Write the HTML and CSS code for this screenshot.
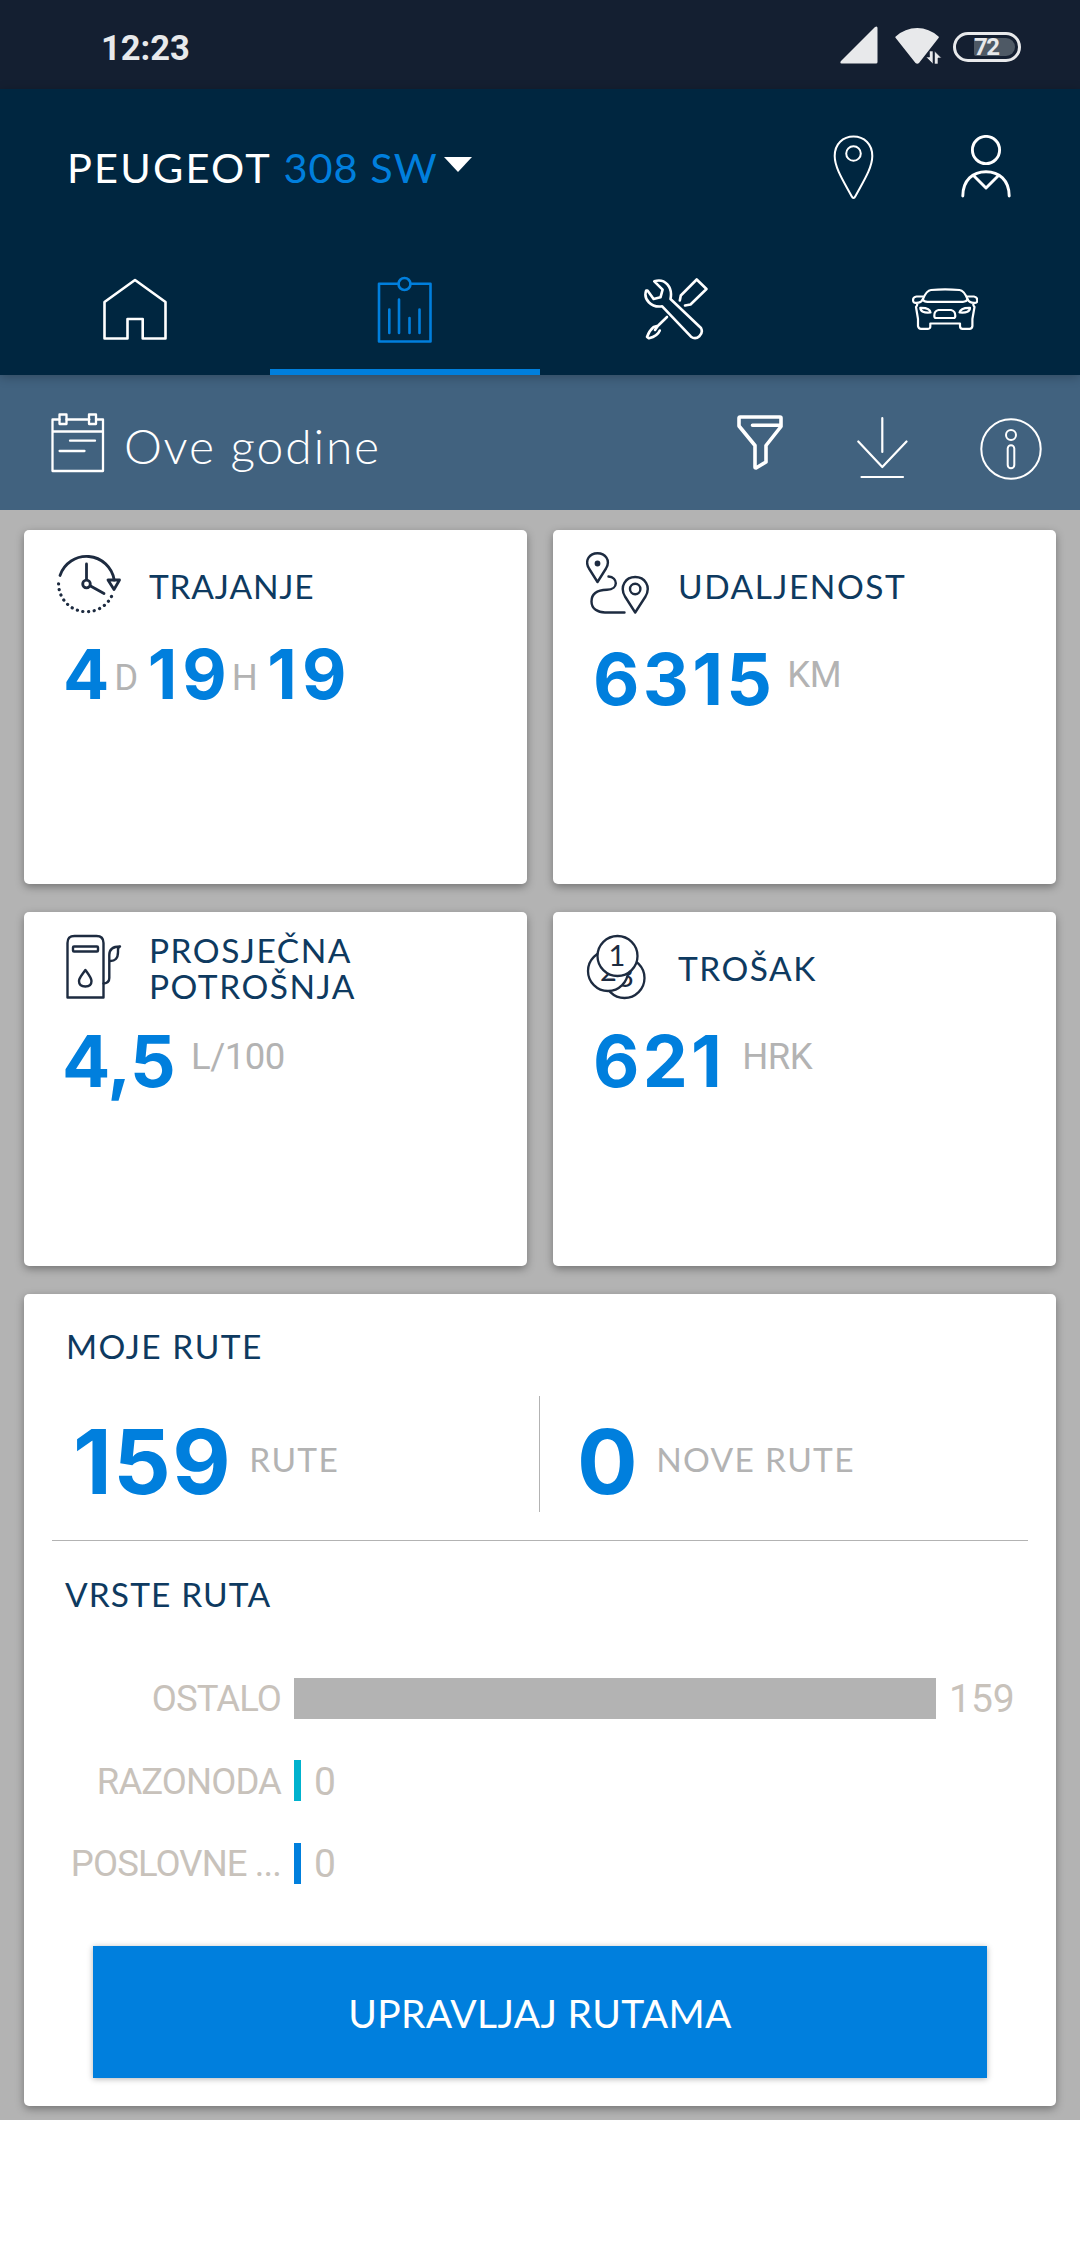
FILE: index.html
```html
<!DOCTYPE html>
<html lang="hr">
<head>
    <meta charset="UTF-8">
    <meta name="viewport" content="width=device-width, initial-scale=1.0">
    <title>Peugeot 308 SW - Rute</title>
    <link rel="stylesheet" href="styles.css">
</head>
<body>
    <div class="status-bar">
        <span class="clock">12:23</span>
        <div class="status-icons">
            <svg class="signal" width="38" height="38" viewBox="0 0 38 38"><path d="M1.5 37.5 Q-.5 37 1 35 L35 1 Q37.5 -.5 37.5 2 V36 Q37.5 37.5 36 37.5Z" fill="#e8e9eb"/></svg>
            <svg class="wifi" width="48" height="36" viewBox="0 0 48 36">
                <path d="M.7 8.5 Q10 0 22.300 0 Q34 0 43.500 8.500 Q44.200 9.200 43.500 10 L24 35 Q22.300 36.500 20.500 35 L.7 10 Q0 9.200 .7 8.500Z" fill="#e8e9eb"/>
                <path d="M38 36 V23 H34.500 V29 H31 L38 36Z M39.500 36 V23 L46.500 30 H43 V36Z" fill="#e8e9eb" stroke="#141f31" stroke-width=".6"/>
            </svg>
            <div class="battery"><span class="battery-level">72</span></div>
        </div>
    </div>

    <header>
        <div class="header-top">
            <h1 class="car-name">PEUGEOT <span class="car-model">308 SW</span></h1>
            <svg class="caret" width="28" height="15" viewBox="0 0 28 15"><path d="M0 0 H28 L14 15Z" fill="#fff"/></svg>
            <svg class="icon pin" width="42" height="66" viewBox="0 0 42 66" stroke-width="2">
                <path d="M20.500 64 Q19.500 64 18.500 62 C11 48 1.700 34 1.700 22 C1.700 10 10 2.500 20.500 2.500 C31 2.500 39.300 10 39.300 22 C39.300 34 30 48 22.500 62 Q21.500 64 20.500 64Z"/>
                <circle cx="20.500" cy="19.500" r="7.300"/>
            </svg>
            <svg class="icon profile" width="50" height="64" viewBox="0 1 50 64" stroke-width="2.900">
                <circle cx="25" cy="16" r="13.600"/>
                <path d="M1.800 62 C1.800 46 12 37.700 25 37.700 C38 37.700 48.200 46 48.200 62 M12.500 41.500 L25 54 L37.500 41.500"/>
            </svg>
        </div>
        <nav class="tabs">
            <a class="tab">
                <svg class="icon" width="66" height="64" viewBox="0 0 66 64" stroke-width="2.600"><path d="M33 3 L63.500 25 V61.500 H40.700 V42 H25.500 V61.500 H2.500 V25Z"/></svg>
            </a>
            <a class="tab active">
                <svg class="icon" width="56" height="68" viewBox="0 0 56 68" stroke-width="2.600">
                    <path d="M21.500 8.700 H2 V66.500 H53.500 V8.700 H33.500"/>
                    <circle cx="27.500" cy="9" r="6"/>
                    <path d="M12.300 34.500 V58 M22 24.500 V58 M32.500 43 V58 M42.500 34.500 V58"/>
                </svg>
            </a>
            <a class="tab">
                <svg class="icon tools" width="66" height="64" viewBox="0 0 66 64" stroke-width="2.600">
                    <path d="M11.300 4.300 C22 1 30 10 27.500 22 L58 51 C61 57 54 64 48 59.700 L19.200 29.300 C8 31 0 22 3.200 13.500 L4.500 13.500 L10.600 22 L17.500 20.300 L19.600 12.700Z"/>
                    <path d="M36.800 23.500 L37.800 18.500 L53.700 2.500 L63.500 12 L47.500 27.500 L42 28.500"/>
                    <path d="M24 40 L15 48.700 L10.600 50 C7 53 5 57 4 60 L6 61.300 C11 60 15 58 16.800 53.500 M15 48.700 L12 53"/>
                </svg>
            </a>
            <a class="tab">
                <svg class="icon" width="66" height="42" viewBox="0 0 66 42" stroke-width="2.200">
                    <path d="M10.700 11.500 C13 6 15 2.300 19 2 Q33 .7 47.500 2 C51.500 2.300 53.500 6 55.700 11.500 Q54 13.800 51 13.800 H15.500 Q12 13.800 10.700 11.500Z"/>
                    <path d="M11 8.500 H4.500 Q1 9 1 12 Q1 15 4 14.800 Q6.500 16 4 19 L6 31 V38 Q6.500 40.800 9 40.800 H16 Q18.500 40.800 18.300 38 V35.500 H48 V38 Q48 40.800 50.500 40.800 H57.500 Q60 40.800 60.400 38 V31 L62.500 19 Q60 16 62.500 14.800 Q65.500 15 65.200 12 Q65.200 9 62 8.500 H55.500 M4 14.800 Q9 15 10.700 11.500 M62.500 14.800 Q57.500 15 55.700 11.500"/>
                    <path d="M8.300 19.800 Q18 19.500 18.500 24.500 Q8.500 25.500 8.300 19.800Z M58 19.800 Q48.500 19.500 47.500 24.500 Q58 25.500 58 19.800Z"/>
                    <path d="M26.500 22 H39 Q43.500 23 43.300 28 Q43.300 30 41.500 30 H24 Q22.300 30 22.300 28 Q22 23 26.500 22Z"/>
                </svg>
            </a>
        </nav>
    </header>

    <div class="filter-bar">
        <svg class="icon" width="54" height="60" viewBox="0 0 54 60" stroke-width="2.300">
            <path d="M8.500 6.500 H1.500 V58 H52 V6.500 H45 M15.500 6.500 H38.300 M1.500 18.500 H52"/>
            <path d="M8.500 1.500 H15.500 V11 H8.500Z M38 1.500 H45 V11 H38Z M19 27.700 H44 M8.600 38 H33.500"/>
        </svg>
        <span class="period">Ove godine</span>
        <svg class="icon funnel" width="46" height="55" viewBox="0 0 46 55" stroke-width="3.600"><path d="M2 3 Q2 2 3 2 H43 Q44 2 44 3 V11.500 L29 30.500 V47 L19 53 Q18 53 18 52 V30.500 L2 11Z M15.500 10.300 H43"/></svg>
        <svg class="icon download" width="51" height="62" viewBox="0 0 51 62" stroke-width="2.200"><path d="M25.300 1.200 V35 M1.300 24.500 L25.300 50 L49.500 24.500 M4.500 60 H46"/></svg>
        <svg class="icon info" width="62" height="62" viewBox="0 0 62 62" stroke-width="2">
            <circle cx="31" cy="31" r="29.700"/>
            <circle cx="31" cy="17" r="5"/>
            <rect x="27.700" y="27.300" width="6.600" height="23" rx="3.300"/>
        </svg>
    </div>

    <main>
        <div class="stats">
            <section class="card">
                <div class="card-head">
                    <svg class="icon dark" width="66" height="66" viewBox="0 -1 66 66" stroke-width="2.800">
                        <path d="M3 22.500 A28 28 0 0 1 57.200 27"/>
                        <path d="M54.500 43.500 A28 28 0 0 1 1.600 29.500" stroke-width="3.200" stroke-dasharray="0.1 5.600"/>
                        <path d="M51 27 H62.500 L57 36.500Z M29.500 11 V26.500 M33.500 33 L47 40.500"/>
                        <circle cx="29.500" cy="31" r="3.800"/>
                    </svg>
                    <h2 class="duration-title">TRAJANJE</h2>
                </div>
                <div class="value duration"><b>4</b><i>D</i><b>19</b><i>H</i><b>19</b></div>
            </section>
            <section class="card">
                <div class="card-head">
                    <svg class="icon dark" width="66" height="66" viewBox="1 1 66 66" stroke-width="2.400">
                        <path d="M12.500 31 L4 17.500 C-1 9 5 2.300 12.500 2.300 C20 2.300 26 9 21 17.500Z"/>
                        <circle cx="12.500" cy="12.500" r="1.700" fill="#1d2b40"/>
                        <path d="M50.200 61.500 L40 45.500 C34 35 41 26 50.200 26 C59.500 26 66.500 35 60.500 45.500Z"/>
                        <circle cx="50.200" cy="38" r="5.200"/>
                        <path d="M23.500 25.500 C33 26 34 38.500 22 38.800 C12 39 6.500 43 6.500 50.500 C6.500 58 13 61.500 20 61.500 H39.500"/>
                    </svg>
                    <h2>UDALJENOST</h2>
                </div>
                <div class="value"><b>6315</b><i>KM</i></div>
            </section>
            <section class="card">
                <div class="card-head">
                    <svg class="icon dark" width="66" height="66" viewBox="-9 0 66 66" stroke-width="2.400">
                        <path d="M1.500 63.500 V9 Q1.500 2 8.500 2 H30.500 Q37.500 2 37.500 9 V63.500Z"/>
                        <rect x="7" y="12.500" width="25" height="5" rx="1"/>
                        <path d="M19.400 36 C16 41 13 44 13 47 Q13 52.500 19.400 52.500 Q25.500 52.500 25.500 47 C25.500 44 23 41 19.400 36Z"/>
                        <path d="M37.500 49.500 Q43.300 49 43.300 44 V21 Q43.300 12.500 54 12.500 Q52 13 52 16 V18 Q52 27.500 43.500 27"/>
                    </svg>
                    <h2>PROSJEČNA<br>POTROŠNJA</h2>
                </div>
                <div class="value consumption"><b>4,5</b><i>L/100</i></div>
            </section>
            <section class="card">
                <div class="card-head">
                    <svg class="icon dark coins" width="66" height="66" viewBox="-1 0 66 66" stroke-width="2.300">
                        <circle cx="37.500" cy="44" r="20"/>
                        <text x="30" y="53">3</text>
                        <circle cx="21" cy="37" r="20"/>
                        <text x="13" y="47">2</text>
                        <circle cx="30.500" cy="22" r="20"/>
                        <text x="21.500" y="32">1</text>
                    </svg>
                    <h2>TROŠAK</h2>
                </div>
                <div class="value cost"><b>621</b><i>HRK</i></div>
            </section>
        </div>

        <section class="card routes">
            <h2>MOJE RUTE</h2>
            <div class="counts">
                <div class="count"><b>159</b><span>RUTE</span></div>
                <div class="count new"><b>0</b><span>NOVE RUTE</span></div>
            </div>
            <h2 class="types-title">VRSTE RUTA</h2>
            <ul class="chart">
                <li><span class="label">OSTALO</span><span class="bar other"></span><span>159</span></li>
                <li><span class="label">RAZONODA</span><span class="bar leisure"></span><span>0</span></li>
                <li><span class="label">POSLOVNE ...</span><span class="bar business"></span><span>0</span></li>
            </ul>
            <button class="manage">UPRAVLJAJ RUTAMA</button>
        </section>
    </main>
</body>
</html>
```
FILE: styles.css
```css
:root {
    --navy: #002640;
    --blue: #007fdd;
    --title: #0e3a60;
    --grey: #b3b3b3;
}

* {
    margin: 0;
    padding: 0;
    box-sizing: border-box;
}

body {
    width: 1080px;
    min-height: 2246px;
    font-family: Lato, "Noto Sans", sans-serif;
    background-color: #fff;
}

svg {
    display: block;
    flex-shrink: 0;
}

.icon {
    fill: none;
    stroke: #fff;
    stroke-linejoin: round;
    stroke-linecap: round;
}

.icon.dark {
    stroke: #1d2b40;
}

/* status bar */
.status-bar {
    display: flex;
    justify-content: space-between;
    height: 89px;
    padding: 0 59px 0 101px;
    background-color: #141f31;
    color: #e8e9eb;
    font-family: Roboto, sans-serif;
}

.clock {
    font-size: 34.5px;
    font-weight: 700;
    line-height: 97px;
}

.status-icons {
    display: flex;
    align-items: flex-start;
    padding-top: 26px;
}

.wifi {
    margin: 2px 10px 0 17px;
}

.battery {
    width: 68px;
    height: 30px;
    margin-top: 6px;
    padding: 3px 3px 3px 18px;
    border: 3px solid #e8e9eb;
    border-radius: 15px;
}

.battery-level {
    display: block;
    height: 18px;
    border-radius: 2px 9px 9px 2px;
    background-color: #4e5965;
    font-size: 24px;
    font-weight: 700;
    line-height: 19px;
    letter-spacing: -1.5px;
}

/* header */
header {
    position: relative;
    height: 286px;
    background-color: var(--navy);
    box-shadow: 0 2px 10px rgba(0,0,0,0.25);
}

.header-top {
    display: flex;
    align-items: center;
    height: 155px;
    padding: 0 69px 0 67px;
}

.car-name {
    color: white;
    font-size: 41.5px;
    font-weight: 400;
    letter-spacing: 2.2px;
    line-height: 154px;
}

.car-model {
    color: var(--blue);
    letter-spacing: 1px;
}

.caret {
    margin: -4px auto 0 6px;
}

.profile {
    margin-left: 86px;
}

.tabs {
    display: grid;
    grid-template-columns: repeat(4, 1fr);
    height: 131px;
}

.tab {
    display: flex;
    align-items: center;
    justify-content: center;
    padding-top: 4px;
    border-bottom: 6px solid transparent;
}

.tab.active {
    border-bottom-color: var(--blue);
}

.tab.active .icon {
    stroke: var(--blue);
}

.tools {
    margin-left: 2px;
}

/* period filter */
.filter-bar {
    display: flex;
    align-items: center;
    height: 135px;
    padding: 0 38px 0 51px;
    background-color: #41627f;
}

.period {
    margin: 5px auto 0 19px;
    color: white;
    font-size: 48px;
    font-weight: 300;
    letter-spacing: 1.8px;
}

.download {
    margin: 11px 72px 0 74px;
}

.info {
    margin-top: 13px;
}

/* cards */
main {
    height: 1610px;
    padding: 20px 24px 0;
    overflow: hidden;
    background-color: var(--grey);
}

.stats {
    display: grid;
    grid-template-columns: repeat(2, 503px);
    grid-auto-rows: 354px;
    gap: 28px 26px;
}

.card {
    border-radius: 5px;
    background: white;
    box-shadow: 0 3px 9px rgba(0,0,0,0.35);
}

.card h2 {
    color: var(--title);
    font-size: 33.5px;
    font-weight: 400;
    line-height: 36px;
    letter-spacing: 1.5px;
}

.card .duration-title {
    letter-spacing: 0.8px;
}

.card-head {
    display: flex;
    align-items: center;
    gap: 26px;
    height: 112px;
    padding: 0 0 0 33px;
}

.card-head .icon {
    margin-top: -3px;
}

.value {
    display: flex;
    align-items: flex-start;
    padding-left: 40px;
}

.value b {
    color: var(--blue);
    font-family: Inter, sans-serif;
    font-size: 71.5px;
    line-height: 74px;
    letter-spacing: 3.3px;
}

.value i {
    margin-left: 12px;
    color: var(--grey);
    font-family: Roboto, sans-serif;
    font-size: 36.5px;
    font-style: normal;
    line-height: 66px;
    letter-spacing: -0.5px;
}

.duration {
    padding-left: 39px;
}

.duration b {
    font-size: 68.5px;
    line-height: 66px;
    letter-spacing: 5px;
}

.duration i {
    margin: 0 10px 0 0;
    line-height: 72px;
}

.consumption {
    padding-left: 38px;
}

.consumption b {
    letter-spacing: -0.7px;
}

.consumption i {
    margin-left: 16px;
}

.cost i {
    margin-left: 17px;
}

.coins circle {
    fill: white;
}

.coins text {
    fill: #1d2b40;
    stroke: none;
    font-size: 29px;
}

/* routes */
.routes {
    height: 812px;
    margin-top: 28px;
    padding: 34px 28px 0;
}

.routes h2 {
    padding-left: 14px;
}

.counts {
    display: grid;
    grid-template-columns: 487px 1fr;
    height: 177px;
    padding: 32px 0 28px;
    border-bottom: 1px solid var(--grey);
}

.count {
    display: flex;
    align-items: center;
    padding: 10px 0 0 21px;
}

.count.new {
    padding-left: 37px;
    border-left: 1px solid var(--grey);
}

.count b {
    padding-top: 6px;
    color: var(--blue);
    font-family: Inter, sans-serif;
    font-size: 90px;
    line-height: 100px;
    letter-spacing: 1.5px;
}

.count span {
    margin-left: 17px;
    color: var(--grey);
    font-size: 33.5px;
    letter-spacing: 1.3px;
}

.routes .types-title {
    margin-top: 35px;
    padding-left: 13px;
    letter-spacing: 1.1px;
}

.chart {
    margin-top: 45px;
    color: #c8c2bb;
    font-family: Roboto, sans-serif;
    font-size: 39px;
    list-style: none;
}

.chart li {
    display: flex;
    align-items: center;
    gap: 13px;
    height: 82.5px;
    line-height: 46px;
}

.label {
    width: 229px;
    padding-top: 2px;
    font-size: 36.5px;
    text-align: right;
    white-space: nowrap;
    letter-spacing: -0.9px;
}

.bar {
    width: 7px;
    height: 41px;
}

.bar + span {
    padding-top: 2px;
}

.other {
    width: 642px;
    background-color: var(--grey);
}

.leisure {
    background-color: #00b2ce;
}

.business {
    background-color: var(--blue);
}

.manage {
    display: block;
    width: 894px;
    height: 132px;
    margin: 41px auto 0;
    padding-top: 2px;
    border: 0;
    background-color: var(--blue);
    box-shadow: 0 1px 6px rgba(0,0,0,0.3);
    color: white;
    font-family: inherit;
    font-size: 39px;
    letter-spacing: 0.3px;
}
```
